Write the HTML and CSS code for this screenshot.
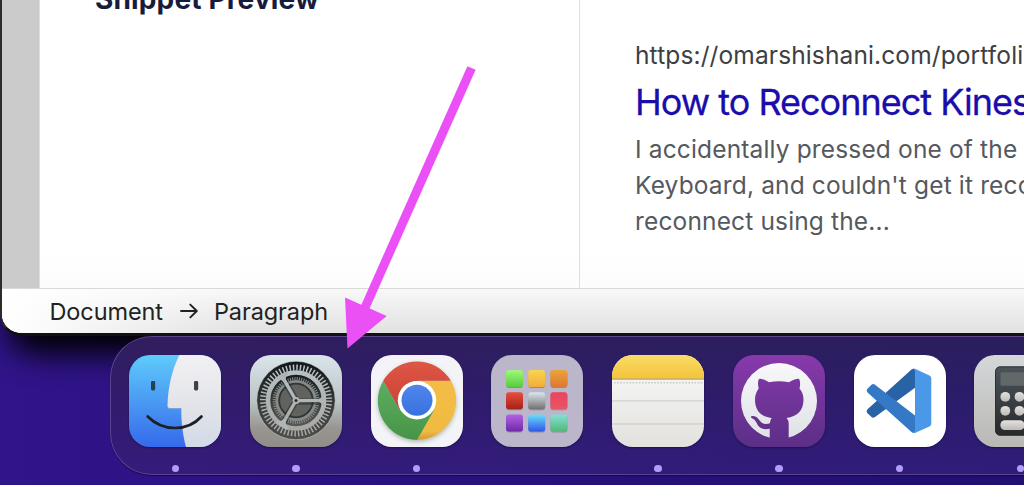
FILE: index.html
```
<!DOCTYPE html>
<html lang="en">
  <head>
    <meta charset="utf-8" />
    <title>Desktop</title>
    <link rel="stylesheet" href="styles.css">
  </head>
  <body>
    <section class="window">
      <div class="content">
        <div class="gutter"></div>
        <div class="settings"><h2>Snippet Preview</h2></div>
        <div class="snippet">
          <div class="url">https://omarshishani.com/portfoli</div>
          <h3 class="title">How to Reconnect Kines</h3>
          <p class="description">I accidentally pressed one of the<br>Keyboard, and couldn't get it reco<br>reconnect using the...</p>
        </div>
      </div>
      <footer class="breadcrumb">
        <span class="crumb-document">Document</span>
        <svg class="crumb-arrow" width="18" height="16" viewBox="0 0 18 16" fill="none" stroke="#222" stroke-width="1.9" stroke-linecap="round" stroke-linejoin="round"><path d="M1 8H16.5M10.3 1.6L16.8 8L10.3 14.4"/></svg>
        <span class="crumb-paragraph">Paragraph</span>
      </footer>
    </section>

    <nav class="dock">
      <!-- finder -->
      <div class="app running">
        <svg class="icon" viewBox="0 0 92 92">
          <defs>
            <linearGradient id="finderBlue" x2="0" y2="1"><stop stop-color="#5fcbfa"/><stop offset="1" stop-color="#3569ec"/></linearGradient>
            <linearGradient id="finderWhite" x2="0" y2="1"><stop stop-color="#f1f1f3"/><stop offset=".5" stop-color="#e4e5ea"/><stop offset="1" stop-color="#d2dae6"/></linearGradient>
          </defs>
          <rect width="92" height="92" fill="url(#finderBlue)"/>
          <path d="M50.300 0C43 15 39 32 38.500 50.500Q38.400 53 40.800 53H52.300C52 67 54 81 57 92H92V0Z" fill="url(#finderWhite)"/>
          <path d="M39.500 53.600H52.300" stroke="#9aa8c5" stroke-width=".8"/>
          <rect x="22" y="26" width="4.200" height="9.500" rx="1.400" fill="#28404f"/>
          <rect x="65" y="26" width="4.200" height="9.500" rx="1.400" fill="#3c4147"/>
          <path d="M18.700 61.500Q30 73 46 73T72.500 61.500" fill="none" stroke="#1b1f26" stroke-width="2.700" stroke-linecap="round"/>
        </svg>
      </div>
      <!-- system settings -->
      <div class="app running">
        <svg class="icon" viewBox="0 0 92 92">
          <defs>
            <linearGradient id="gearBg" x2="0" y2="1"><stop stop-color="#dae5eb"/><stop offset=".5" stop-color="#bcc4c5"/><stop offset=".8" stop-color="#989591"/><stop offset="1" stop-color="#918d88"/></linearGradient>
            <linearGradient id="gearDark" x2="0" y2="1"><stop stop-color="#121719"/><stop offset=".6" stop-color="#3a3d3c"/><stop offset="1" stop-color="#4f4e4b"/></linearGradient>
            <linearGradient id="gearHole" x2="0" y2="1"><stop stop-color="#151b1b"/><stop offset="1" stop-color="#5c5b58"/></linearGradient>
            <linearGradient id="gearMetal" gradientUnits="userSpaceOnUse" x1="0" y1="8" x2="0" y2="84"><stop stop-color="#b9c4c8"/><stop offset="1" stop-color="#a5a4a1"/></linearGradient>
          </defs>
          <rect width="92" height="92" fill="url(#gearBg)"/>
          <circle cx="46" cy="45.500" r="39.200" fill="url(#gearDark)" stroke="#cfd2d0" stroke-opacity=".6" stroke-width=".9"/>
          <circle cx="46" cy="45.500" r="33" fill="none" stroke="url(#gearMetal)" stroke-width="6" stroke-dasharray="1.500 1.956"/>
          <circle cx="46" cy="45.500" r="28" fill="url(#gearHole)" stroke="url(#gearMetal)" stroke-width="4.600"/>
          <circle cx="46" cy="45.500" r="21.700" fill="none" stroke="#868c8b" stroke-width="3.400" stroke-dasharray="1.100 1.172"/>
          <circle cx="46" cy="45.500" r="19" fill="#62635f" stroke="#858a89" stroke-width="3"/>
          <circle cx="46" cy="45.500" r="16.800" fill="none" stroke="#303635" stroke-width="1.800"/>
          <g stroke="#171d1e" stroke-opacity=".45" stroke-width="6.500"><path d="M46 46.500H71M46 45.500L33.500 23.800M46 45.500L33.500 67.200"/></g>
          <g stroke="url(#gearMetal)" stroke-width="3.400">
            <path d="M46 45.600L74 45.400M46 45.500L32 21.200M46 45.500L32 69.800"/>
          </g>
          <g fill="url(#gearMetal)">
            <path d="M68 43.900Q72 43.600 73.500 38.500H76V52.500H73.500Q72 47.400 68 47.100Z"/>
            <path d="M68 43.900Q72 43.600 73.500 38.500H76V52.500H73.500Q72 47.400 68 47.100Z" transform="rotate(120 46 45.500)"/>
            <path d="M68 43.900Q72 43.600 73.500 38.500H76V52.500H73.500Q72 47.400 68 47.100Z" transform="rotate(240 46 45.500)"/>
            <circle cx="46" cy="45.500" r="3.500"/>
          </g>
          <circle cx="46" cy="45.500" r="1.500" fill="#252a2b"/>
        </svg>
      </div>
      <!-- chrome -->
      <div class="app running">
        <svg class="icon" viewBox="0 0 92 92">
          <defs>
            <linearGradient id="chromeRed" x2="0" y2="1"><stop stop-color="#dd5646"/><stop offset="1" stop-color="#cb4235"/></linearGradient>
            <linearGradient id="chromeGreen" x2="0" y2="1"><stop stop-color="#5cae63"/><stop offset="1" stop-color="#489446"/></linearGradient>
            <linearGradient id="chromeYellow" x2="0" y2="1"><stop stop-color="#f3bc45"/><stop offset=".85" stop-color="#f1bb42"/><stop offset="1" stop-color="#d8962f"/></linearGradient>
            <linearGradient id="chromeBlue" x2="0" y2="1"><stop stop-color="#5086ec"/><stop offset="1" stop-color="#3872df"/></linearGradient>
            <filter id="chromeShadow" x="-20%" y="-20%" width="140%" height="150%"><feDropShadow dx="0" dy="2" stdDeviation="2" flood-color="#3f5c40" flood-opacity=".4"/></filter>
          </defs>
          <rect width="92" height="92" fill="#f4f4f8"/>
          <g filter="url(#chromeShadow)">
            <path d="M46 25.700H79.800A39.300 39.300 0 0 1 46 84.900L63 55.200Z" fill="url(#chromeYellow)"/>
            <path d="M63 55.200L46 84.900A39.300 39.300 0 0 1 12.200 25.700L29 55.200L46 60Z" fill="url(#chromeGreen)"/>
            <path d="M12.200 25.700A39.300 39.300 0 0 1 79.800 25.700H46L29 55.200Z" fill="url(#chromeRed)"/>
          </g>
          <circle cx="46" cy="45.200" r="19.200" fill="#fff"/>
          <circle cx="46" cy="45.200" r="15.500" fill="url(#chromeBlue)"/>
        </svg>
      </div>
      <!-- launchpad -->
      <div class="app">
        <svg class="icon" viewBox="0 0 92 92">
          <defs>
            <linearGradient id="lp1" x2="0" y2="1"><stop stop-color="#a0f87a"/><stop offset="1" stop-color="#58cd3d"/></linearGradient>
            <linearGradient id="lp2" x2="0" y2="1"><stop stop-color="#f7d550"/><stop offset="1" stop-color="#f1ad37"/></linearGradient>
            <linearGradient id="lp3" x2="0" y2="1"><stop stop-color="#eda23b"/><stop offset="1" stop-color="#dc7832"/></linearGradient>
            <linearGradient id="lp4" x2="0" y2="1"><stop stop-color="#e94e3d"/><stop offset="1" stop-color="#a42019"/></linearGradient>
            <linearGradient id="lp5" x2="0" y2="1"><stop stop-color="#dce6ed"/><stop offset="1" stop-color="#71716f"/></linearGradient>
            <linearGradient id="lp6" x2="0" y2="1"><stop stop-color="#ea4460"/><stop offset="1" stop-color="#e95564"/></linearGradient>
            <linearGradient id="lp7" x2="0" y2="1"><stop stop-color="#b362e3"/><stop offset="1" stop-color="#6c29a8"/></linearGradient>
            <linearGradient id="lp8" x2="0" y2="1"><stop stop-color="#6bdcfb"/><stop offset="1" stop-color="#2e55e8"/></linearGradient>
            <linearGradient id="lp9" x2="0" y2="1"><stop stop-color="#87dfd6"/><stop offset="1" stop-color="#50b878"/></linearGradient>
            <filter id="lpShadow"><feDropShadow dx="0" dy=".7" stdDeviation=".5" flood-opacity=".35"/></filter>
          </defs>
          <rect width="92" height="92" fill="#bbb6ca"/>
          <g filter="url(#lpShadow)">
            <rect x="15" y="15" width="17" height="17" rx="3" fill="url(#lp1)"/>
            <rect x="37.200" y="15" width="17" height="17" rx="3" fill="url(#lp2)"/>
            <rect x="59.400" y="15" width="17" height="17" rx="3" fill="url(#lp3)"/>
            <rect x="15" y="37.300" width="17" height="17" rx="3" fill="url(#lp4)"/>
            <rect x="37.200" y="37.300" width="17" height="17" rx="3" fill="url(#lp5)"/>
            <rect x="59.400" y="37.300" width="17" height="17" rx="3" fill="url(#lp6)"/>
            <rect x="15" y="59.600" width="17" height="17" rx="3" fill="url(#lp7)"/>
            <rect x="37.200" y="59.600" width="17" height="17" rx="3" fill="url(#lp8)"/>
            <rect x="59.400" y="59.600" width="17" height="17" rx="3" fill="url(#lp9)"/>
          </g>
        </svg>
      </div>
      <!-- notes -->
      <div class="app running">
        <svg class="icon" viewBox="0 0 92 92">
          <defs>
            <linearGradient id="notesTop" x2="0" y2="1"><stop stop-color="#f9dc68"/><stop offset="1" stop-color="#f4c339"/></linearGradient>
            <linearGradient id="notesPaper" x2="0" y2="1"><stop stop-color="#fafaf9"/><stop offset="1" stop-color="#e2e1dd"/></linearGradient>
          </defs>
          <rect width="92" height="92" fill="url(#notesPaper)"/>
          <rect width="92" height="24" fill="url(#notesTop)"/>
          <path d="M0 24.100H92" stroke="#b3a584" stroke-width="1.300"/>
          <path d="M2 27.800H91" stroke="#c9c9c9" stroke-width="1.500" stroke-dasharray="1.600 1.500"/>
          <path d="M0 45.900H92M0 69H92" stroke="#d2d2d3" stroke-width="1.400"/>
        </svg>
      </div>
      <!-- github desktop -->
      <div class="app running">
        <svg class="icon" viewBox="0 0 92 92">
          <defs>
            <linearGradient id="ghBg" gradientUnits="userSpaceOnUse" x1="0" y1="0" x2="0" y2="92"><stop stop-color="#8839ab"/><stop offset="1" stop-color="#5b2f87"/></linearGradient>
            <linearGradient id="ghDisc" x2="0" y2="1"><stop stop-color="#f8f8fa"/><stop offset="1" stop-color="#dfe1e6"/></linearGradient>
          </defs>
          <rect width="92" height="92" fill="url(#ghBg)"/>
          <circle cx="46" cy="46" r="38" fill="url(#ghDisc)"/>
          <path d="M25.600 24.600Q26 23.500 27.500 23.700C31 24.300 33.500 25.700 36 27.300Q46 25.200 56 27.300C59 25.400 61.500 24.300 64.700 23.700Q66.300 23.600 66.600 25Q67.700 29.300 66.500 33.500C69 36.500 70.500 40 70.500 44.500C70.500 56 64 61.500 53.600 62.900Q55.700 65 55.700 69V86H36.700V73.800C31 75 27 73.500 25 70.500C23 67 22 64.500 19.500 63.500C17 62.700 17.500 61 20 61C23.500 61 25.500 64 27.500 66.500C30 69.300 33.500 69.500 36.800 68.200Q37 65 38.700 62.900C28 61.500 22 56 22 44.500C22 40 23.500 36.500 25.700 33.500Q24.400 29 25.600 24.600Z" fill="url(#ghBg)"/>
        </svg>
      </div>
      <!-- vs code -->
      <div class="app running">
        <svg class="icon" viewBox="0 0 92 92">
          <rect width="92" height="92" fill="#fff"/>
          <path d="M57.500 14.500Q59.500 12.800 61 14.500V32.700L21 62Q19.200 63.400 17.500 62L13.200 58Q11.800 56 13.500 54.200Z" fill="#2863a6"/>
          <path d="M17.500 29.800Q19.200 28.200 21 29.700L61 60.500V76.500Q60 79 57.500 77L13.500 37.600Q11.800 35.800 13.200 34Z" fill="#3478c6"/>
          <path d="M59 13.700Q60.500 13.400 62 14.200L75.500 20.500Q77.300 21.500 77.300 23.500V68.500Q77.300 70.500 75.500 71.400L62 77.600Q60.500 78.500 59 77.800Q61 77 61 74.500V16.500Q61 14.500 59 13.700Z" fill="#4b98e9"/>
        </svg>
      </div>
      <!-- calculator -->
      <div class="app running">
        <svg class="icon" viewBox="0 0 92 92">
          <defs>
            <linearGradient id="calcBg" x2="0" y2="1"><stop stop-color="#d5d7d9"/><stop offset="1" stop-color="#b9b8b5"/></linearGradient>
            <linearGradient id="calcBody" x2="0" y2="1"><stop stop-color="#4b545a"/><stop offset="1" stop-color="#282a2b"/></linearGradient>
            <linearGradient id="calcKey" x2="0" y2="1"><stop stop-color="#e4e2df"/><stop offset="1" stop-color="#bdbbb8"/></linearGradient>
          </defs>
          <rect width="92" height="92" fill="url(#calcBg)"/>
          <rect x="21.500" y="11.800" width="49.500" height="68.500" rx="4.500" fill="url(#calcBody)" stroke="#2b3032" stroke-width="1"/>
          <rect x="26.500" y="17.300" width="39.500" height="13.500" rx="1.500" fill="#62676a"/>
          <g fill="url(#calcKey)">
            <circle cx="31.300" cy="41.800" r="4.900"/><circle cx="45.500" cy="41.800" r="4.900"/><circle cx="59.700" cy="41.800" r="4.900"/>
            <circle cx="31.300" cy="55.800" r="4.900"/><circle cx="45.500" cy="55.800" r="4.900"/><circle cx="59.700" cy="55.800" r="4.900"/>
            <rect x="26.400" y="65.200" width="24" height="9.800" rx="4.500"/>
          </g>
        </svg>
      </div>
    </nav>

    <svg class="pointer" width="1024" height="485" viewBox="0 0 1024 485">
      <path d="M471.500 68L363.500 311" stroke="#eb50f7" stroke-width="9"/>
      <path d="M345 297.500L386.700 316L347.500 348.500Z" fill="#eb50f7"/>
    </svg>
  </body>
</html>
```
FILE: styles.css
```
* {
  box-sizing: border-box;
}

body {
  margin: 0;
  width: 1024px;
  height: 485px;
  overflow: hidden;
  position: relative;
  font-family: Inter, "Liberation Sans", sans-serif;
  background: linear-gradient(90deg, #30148a 0%, #27117d 45%, #210f72 100%);
}

h2,
h3,
p {
  margin: 0;
}

.window {
  width: 1024px;
  height: 336px;
  display: flex;
  flex-direction: column;
  border-left: 2px solid #2c2c2c;
  border-bottom: 3px solid #111;
  border-bottom-left-radius: 22px;
  background: #fff;
  overflow: hidden;
  box-shadow: 14px 12px 30px 6px #000;
}

.content {
  height: 288px;
  display: flex;
  background: linear-gradient(#fff 88%, #fcfcfc);
}

.gutter {
  flex: 0 0 38px;
  background: #cbcbcb;
  border-right: 1px solid #ddd;
}

.settings {
  flex: 0 0 540px;
  padding-left: 55px;
  border-right: 1px solid #dfdfdf;
}

.settings h2 {
  margin-top: -18px;
  font-size: 28px;
  line-height: 34px;
  font-weight: 700;
  letter-spacing: 0.15px;
  color: #181c3c;
  white-space: nowrap;
}

.snippet {
  flex: 1;
  min-width: 0;
  padding: 38px 0 0 55px;
  white-space: nowrap;
}

.url {
  font-size: 24.5px;
  line-height: 34px;
  letter-spacing: 0.12px;
  color: #3c4043;
}

.title {
  margin-top: 8px;
  font-size: 36px;
  line-height: 44px;
  font-weight: 400;
  letter-spacing: -1px;
  color: #1a0dab;
  -webkit-text-stroke: 0.3px #1a0dab;
}

.description {
  margin-top: 8px;
  font-size: 24.5px;
  line-height: 35.8px;
  letter-spacing: 0.15px;
  color: #55595e;
}

.breadcrumb {
  height: 45px;
  padding-left: 47.5px;
  display: flex;
  align-items: center;
  border-top: 1px solid #d9d9d9;
  background: linear-gradient(90deg, #fff 0, rgba(255, 255, 255, 0) 240px), linear-gradient(#f8f8f8, #e1e1e1);
  font-size: 23.5px;
  letter-spacing: -0.1px;
  color: #222;
}

.crumb-arrow {
  margin: 0 16px 0 17px;
}

.dock {
  position: relative;
  width: 914px;
  height: 139px;
  margin-left: 110px;
  padding: 18px 0 0 18.4px;
  display: flex;
  gap: 28.7px;
  overflow: hidden;
  border: 1px solid #5b448b;
  border-right: none;
  border-radius: 42px 0 0 42px;
  background: linear-gradient(90deg, rgba(65, 28, 137, 0.3), rgba(46, 30, 130, 0.3)), linear-gradient(#291f4c 0%, #2b1b60 45%, #301b77 100%);
  box-shadow: 0 1px 1px #150a50;
}

.app {
  width: 92px;
  flex-shrink: 0;
  display: flex;
  flex-direction: column;
  align-items: center;
  gap: 18px;
}

.icon {
  width: 92px;
  height: 92px;
  border-radius: 21px;
  box-shadow: 0 1px 2px rgba(10, 5, 40, 0.5);
}

.running::after {
  content: "";
  width: 7.4px;
  height: 7.4px;
  border-radius: 50%;
  background: #b49bfa;
}

.pointer {
  position: absolute;
  top: 0;
  left: 0;
}
```
